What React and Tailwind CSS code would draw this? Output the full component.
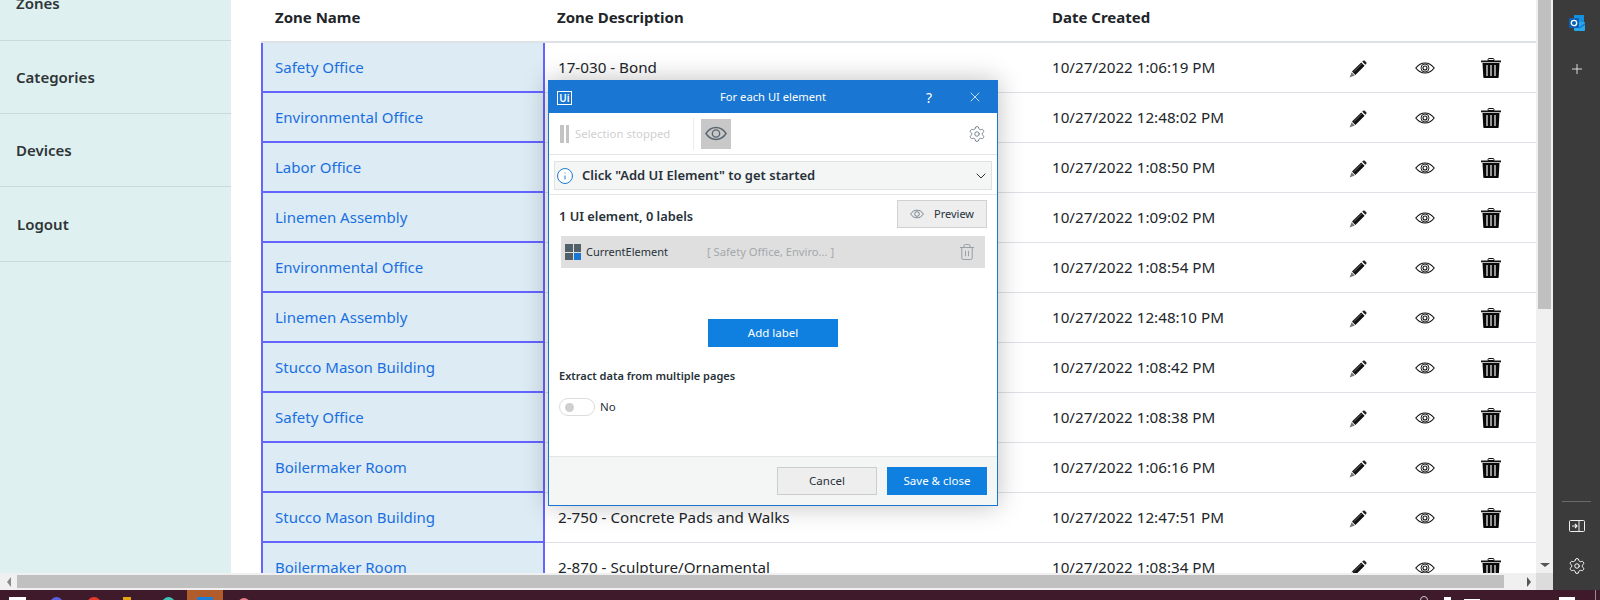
import React from "react";
import { Settings, Info, ChevronDown, Trash2, X, Plus } from "lucide-react";

const rows = [
  ["Safety Office", "17-030 - Bond", "10/27/2022 1:06:19 PM"],
  ["Environmental Office", "", "10/27/2022 12:48:02 PM"],
  ["Labor Office", "", "10/27/2022 1:08:50 PM"],
  ["Linemen Assembly", "", "10/27/2022 1:09:02 PM"],
  ["Environmental Office", "", "10/27/2022 1:08:54 PM"],
  ["Linemen Assembly", "", "10/27/2022 12:48:10 PM"],
  ["Stucco Mason Building", "", "10/27/2022 1:08:42 PM"],
  ["Safety Office", "", "10/27/2022 1:08:38 PM"],
  ["Boilermaker Room", "", "10/27/2022 1:06:16 PM"],
  ["Stucco Mason Building", "2-750 - Concrete Pads and Walks", "10/27/2022 12:47:51 PM"],
  ["Boilermaker Room", "2-870 - Sculpture/Ornamental", "10/27/2022 1:08:34 PM"],
];

function PencilIcon() {
  return (
    <svg width="18" height="18" viewBox="0 0 18 18">
      <path d="M3 11.6 12.2 2.4 15.6 5.8 6.4 15Z" fill="#111" />
      <path d="M5 11.6 12.6 4" stroke="#888" strokeWidth="0.7" />
      <path d="M13.2 1.6 14.2.7c.5-.4 1.1-.4 1.5 0l1.6 1.6c.4.4.4 1 0 1.5l-1 1Z" fill="#222" />
      <path d="M2.6 12.2 5.8 15.4 .6 17.4Z" fill="#777" />
    </svg>
  );
}

function EyeIcon() {
  return (
    <svg width="20" height="12" viewBox="0 0 20 12" fill="none" stroke="#111">
      <path d="M.8 6C3.5 2.6 6.5 1 10 1s6.5 1.6 9.2 5c-2.700 3.400-5.700 5-9.200 5S3.500 9.400.8 6Z" strokeWidth="1.200" />
      <circle cx="10" cy="6" r="4" strokeWidth="0.900" />
      <circle cx="10" cy="6" r="2" strokeWidth="1.100" />
    </svg>
  );
}

function TrashIcon() {
  return (
    <svg width="20" height="20" viewBox="0 0 20 20">
      <path d="M7 2.500V1.500C7 .9 7.400.5 8 .5h4c.6 0 1 .4 1 1v1Z" fill="none" stroke="#111" strokeWidth="1" />
      <rect x="0" y="2.500" width="20" height="1.800" fill="#111" />
      <path d="M1.500 5h17l-.8 14c0 .6-.5 1-1 1H3.300c-.5 0-1-.4-1-1Z" fill="#0a0a0a" />
      <rect x="5.200" y="7" width="1.600" height="11" fill="#bbb" />
      <rect x="9.200" y="7" width="1.600" height="11" fill="#bbb" />
      <rect x="13.200" y="7" width="1.600" height="11" fill="#bbb" />
    </svg>
  );
}

function GrayEye({ w, h, color }) {
  return (
    <svg width={w} height={h} viewBox="0 0 24 15" fill="none" stroke={color} strokeWidth="1.500">
      <path d="M1 7.500C4 3 7.500 1 12 1s8 2 11 6.500C20 12 16.500 14 12 14S4 12 1 7.500Z" />
      <circle cx="12" cy="7.500" r="4" />
    </svg>
  );
}

function Outlook() {
  return (
    <svg width="16" height="16" viewBox="0 0 16 16">
      <rect x="5" y="0" width="10" height="8" fill="#1490df" />
      <rect x="5" y="7" width="11" height="9" rx="1" fill="#28a8ea" />
      <path d="M5 8 10.500 12 16 8v2l-5.500 3.500L5 10Z" fill="#0f78d4" />
      <rect x="0" y="3" width="10" height="10" rx="1" fill="#0a5fb4" />
      <circle cx="5" cy="8" r="2.700" fill="none" stroke="#fff" strokeWidth="1.300" />
    </svg>
  );
}

function PanelIcon() {
  return (
    <svg width="16" height="12" viewBox="0 0 16 12" fill="none" stroke="#f0f0f0" strokeWidth="1">
      <rect x=".5" y=".5" width="15" height="11" rx="1" />
      <path d="M10 .5v11" />
      <path d="M3 6h5M6 4l2 2-2 2" strokeWidth="1.200" />
    </svg>
  );
}

function Arrow({ dir }) {
  const cls = {
    left: "border-y-[5px] border-y-transparent border-r-[4px] border-r-[#8a8a8a]",
    right: "border-y-[5px] border-y-transparent border-l-[4px] border-l-[#555]",
    down: "border-x-[5px] border-x-transparent border-t-[4px] border-t-[#555]",
  }[dir];
  return <div className={`w-0 h-0 ${cls}`} />;
}

function SideItem({ label, h, pl }) {
  return (
    <div className={`flex items-center border-b border-[#c8dbda] font-semibold text-[#2f3437] text-[15px] ${h} ${pl}`}>
      {label}
    </div>
  );
}

function Dialog() {
  return (
    <div className="absolute left-[548px] top-[80px] w-[450px] h-[426px] flex flex-col border border-[#1976d2] bg-white shadow-[0_0_24px_rgba(0,0,0,0.25)] text-[12px] text-[#273139]">
      <div className="relative h-[32px] shrink-0 bg-[#1976d2] flex items-center justify-center text-white text-[11.200px]">
        <div className="absolute left-[8px] top-[10px] w-[15px] h-[14px] border border-white flex items-center justify-center text-[10px] font-semibold leading-none">Ui</div>
        <span>For each UI element</span>
        <span className="absolute left-[377px] top-[6px] text-[14px]">?</span>
        <X className="absolute left-[418px] top-[8px]" size={16} strokeWidth={1.100} />
      </div>
      <div className="h-[42px] shrink-0 border-b border-[#e4e6e6] flex items-center pl-[11px] pr-[11px]">
        <div className="flex gap-[2px]">
          <div className="w-[3.500px] h-[18px] bg-[#c4c4c4]" />
          <div className="w-[3.500px] h-[18px] bg-[#c4c4c4]" />
        </div>
        <span className="ml-[6px] w-[118px] text-[#d0d0d0] text-[11.400px]">Selection stopped</span>
        <div className="w-px h-[32px] bg-[#eceeee]" />
        <div className="ml-[7px] w-[30px] h-[30px] bg-[#c8c8c8] flex items-center justify-center">
          <GrayEye w={22} h={15} color="#5a6670" />
        </div>
        <Settings className="ml-auto mr-0 text-[#6b7882]" size={18} strokeWidth={1.200} />
      </div>
      <div className="h-[40px] shrink-0 border-b border-[#e4e6e6] px-[5px] pt-[6px]">
        <div className="h-[29px] border border-[#e0e2e2] bg-[#f4f5f5] flex items-center pl-[1px] pr-[2px]">
          <Info className="text-[#1976d2] fill-white" size={18} strokeWidth={1.300} />
          <span className="ml-[8px] text-[13px] font-semibold text-[#273139]">Click "Add UI Element" to get started</span>
          <ChevronDown className="ml-auto text-[#273139]" size={16} strokeWidth={1.500} />
        </div>
      </div>
      <div className="h-[41px] shrink-0 pt-[2px] flex items-center justify-between pl-[10px] pr-[10px]">
        <span className="font-semibold text-[12.800px]">1 UI element, 0 labels</span>
        <div className="mt-[-5px] w-[90px] h-[28px] bg-[#eeeeef] border border-[#cfd1d2] flex items-center text-[11px] pl-[12px]">
          <GrayEye w={14} h={10} color="#6b7882" />
          <span className="ml-[10px]">Preview</span>
        </div>
      </div>
      <div className="mx-[12px] h-[32px] shrink-0 bg-[#dfdfdf] flex items-center pl-[4px] pr-[9px]">
        <div className="grid grid-cols-2 gap-[1px] w-[16px] h-[16px]">
          <div className="bg-[#526069]" />
          <div className="bg-[#526069]" />
          <div className="bg-[#526069]" />
          <div className="bg-[#1976d2]" />
        </div>
        <span className="ml-[5px] w-[121px] text-[11px]">CurrentElement</span>
        <span className="text-[#a4a8ab] text-[11.200px]">[ Safety Office, Enviro... ]</span>
        <Trash2 className="ml-auto text-[#8a959c]" size={18} strokeWidth={1.100} />
      </div>
      <div className="mt-[51px] mx-auto w-[130px] h-[28px] shrink-0 bg-[#1080e0] text-white flex items-center justify-center text-[11.500px]">Add label</div>
      <div className="mt-[21px] ml-[10px] font-semibold text-[11px] leading-[16px]">Extract data from multiple pages</div>
      <div className="mt-[14px] ml-[10px] flex items-center">
        <div className="w-[36px] h-[18px] rounded-full border border-[#dcdcdc] flex items-center pl-[5px]">
          <div className="w-[9px] h-[9px] rounded-full bg-[#cfcfcf]" />
        </div>
        <span className="ml-[5px] text-[11.500px]">No</span>
      </div>
      <div className="mt-auto h-[49px] shrink-0 border-t border-[#e4e6e6] bg-[#f4f6f6] flex items-center justify-end gap-[10px] pr-[10px] text-[11.500px]">
        <div className="w-[100px] h-[28px] bg-[#eeeeef] border border-[#cbcdce] flex items-center justify-center">Cancel</div>
        <div className="w-[100px] h-[28px] bg-[#1080e0] text-white flex items-center justify-center">Save &amp; close</div>
      </div>
    </div>
  );
}

function TableRow({ name, desc, date }) {
  return (
    <div className="flex h-[50px] shrink-0 text-[15.200px]">
      <div className="w-[284px] shrink-0 bg-[#dcebf4] border-x-2 border-b-2 border-[#6464ff] flex items-center pl-[12px] text-[15px] text-[#1a6fe0]">
        {name}
      </div>
      <div className="flex-1 flex border-b border-[#dee2e6] items-center text-[#212529]">
        <div className="w-[495px] shrink-0 pl-[13px]">{desc}</div>
        <div className="w-[309px] shrink-0 pl-[12px]">{date}</div>
        <div className="w-[18px] shrink-0 flex mt-[2px]"><PencilIcon /></div>
        <div className="ml-[48px] w-[20px] shrink-0 flex mt-[1px]"><EyeIcon /></div>
        <div className="ml-[46px] w-[20px] shrink-0 flex"><TrashIcon /></div>
      </div>
    </div>
  );
}

export default function App() {
  return (
    <div className="w-[1600px] h-[600px] flex flex-col overflow-hidden bg-white font-['Noto_Sans','Open_Sans',sans-serif]">
      <div className="flex h-[590px] shrink-0">
        <div className="w-[1553px] shrink-0 flex flex-col">
          <div className="relative h-[573px] shrink-0 flex overflow-hidden">
            <aside className="w-[231px] shrink-0 bg-[#def1f0]">
              <div className="mt-[-33px]">
                <SideItem label="Zones" h="h-[74px]" pl="pl-[16px]" />
                <SideItem label="Categories" h="h-[73px]" pl="pl-[16px]" />
                <SideItem label="Devices" h="h-[73px]" pl="pl-[16px]" />
                <SideItem label="Logout" h="h-[75px]" pl="pl-[17px]" />
              </div>
            </aside>
            <main className="w-[1305px] shrink-0 pl-[30px]">
              <div className="h-[43px] pb-[6px] flex items-center border-b-2 border-[#dee2e6] font-bold text-[15px] text-[#212529]">
                <div className="w-[284px] shrink-0 pl-[14px]">Zone Name</div>
                <div className="w-[495px] shrink-0 pl-[12px]">Zone Description</div>
                <div className="pl-[12px]">Date Created</div>
              </div>
              <div className="flex flex-col">
                {rows.map((r, i) => (
                  <TableRow key={i} name={r[0]} desc={r[1]} date={r[2]} />
                ))}
              </div>
            </main>
            <div className="w-[17px] shrink-0 bg-[#f0f0f0] flex flex-col items-center px-[2px]">
              <div className="w-[13px] h-[309px] bg-[#c0c0c0]" />
              <div className="mt-auto mb-[6px]"><Arrow dir="down" /></div>
            </div>
            <Dialog />
          </div>
          <div className="h-[17px] shrink-0 flex bg-[#f0f0f0] items-center">
            <div className="w-[17px] shrink-0 flex justify-center"><Arrow dir="left" /></div>
            <div className="w-[1487px] h-[13px] shrink-0 bg-[#c0c0c0]" />
            <div className="flex-1 flex justify-end pr-[5px]"><Arrow dir="right" /></div>
            <div className="w-[17px] h-[17px] shrink-0 bg-[#dcdcdc]" />
          </div>
        </div>
        <div className="w-[47px] shrink-0 bg-[#3b3b3b] flex flex-col items-center">
          <div className="mt-[15px] flex"><Outlook /></div>
          <Plus className="mt-[30px] text-white" size={16} strokeWidth={1.200} />
          <div className="mt-auto w-[29px] h-px bg-[#6a6a6a]" />
          <div className="mt-[18px] flex"><PanelIcon /></div>
          <Settings className="mt-[25px] mb-[15px] text-white" size={18} strokeWidth={1.300} />
        </div>
      </div>
      <div className="relative h-[10px] shrink-0 bg-[#3f1a2b] flex items-start overflow-hidden">
        <div className="ml-[9px] mt-[7px] w-[17px] h-[10px] bg-white" />
        <div className="ml-[24px] mt-[7px] w-[13px] h-[13px] rounded-full bg-[#5b5fe0]" />
        <div className="ml-[24px] mt-[7px] w-[14px] h-[14px] rounded-full bg-[#e53a2a]" />
        <div className="ml-[22px] mt-[7px] w-[8px] h-[8px] bg-[#e2a80e]" />
        <div className="ml-[31px] mt-[7px] w-[13px] h-[13px] rounded-full bg-[#3cc3b5]" />
        <div className="ml-[12px] w-[36px] h-[10px] bg-[#b05c2c] flex justify-center">
          <div className="mt-[7px] w-[16px] h-[8px] bg-[#1a7fd8]" />
        </div>
        <div className="ml-[15px] mt-[8px] w-[12px] h-[12px] rounded-full bg-[#e8808a]" />
        <div className="ml-[1170px] mt-[6px] w-[8px] h-[8px] rounded-full border border-[#d0c8cc]" />
        <div className="ml-[16px] mt-[7px] w-[7px] h-[8px] bg-white" />
        <div className="ml-[13px] mt-[9px] w-[16px] h-[8px] bg-white" />
        <div className="ml-[79px] mt-[7px] w-[16px] h-[8px] bg-white" />
        <div className="ml-[20px] w-px h-[10px] bg-[#9a8a92]" />
      </div>
    </div>
  );
}
